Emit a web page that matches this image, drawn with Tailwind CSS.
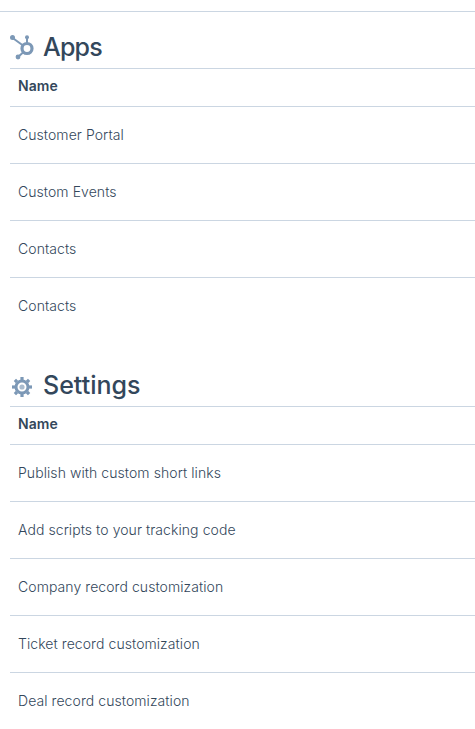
<!DOCTYPE html>
<html lang="en">
<head>
    <meta charset="UTF-8">
    <title>Apps and Settings</title>
    <script src="https://cdn.jsdelivr.net/npm/@tailwindcss/browser@4"></script>
</head>
<body class="bg-white overflow-hidden font-['Inter',sans-serif] text-[#33475b]">
    <div class="mt-[11px] border-t border-[#cbd6e2]"></div>

    <section class="pl-[10px]">
        <div class="h-[56px] pt-[15px] flex items-center gap-[8px]">
            <svg class="w-[25px] h-[26px] shrink-0" viewBox="0 0 25 26" fill="none">
                <circle cx="17" cy="13.5" r="5" stroke="#7c98b6" stroke-width="3.2"/>
                <path d="M2 2.5L13 10.5" stroke="#7c98b6" stroke-width="2"/>
                <path d="M17 2V9" stroke="#7c98b6" stroke-width="2"/>
                <path d="M13 17.5L8 22" stroke="#7c98b6" stroke-width="2"/>
                <circle cx="2.5" cy="2.5" r="2.5" fill="#7c98b6"/>
                <circle cx="17" cy="2.2" r="2" fill="#7c98b6"/>
                <circle cx="8" cy="22" r="2.4" fill="#7c98b6"/>
            </svg>
            <h2 class="text-[25px] font-medium leading-none tracking-[-0.8px]">Apps</h2>
        </div>
        <div class="h-[39px] border-y border-[#cbd6e2] pl-[8px] pb-[4px] flex items-center text-[14px] font-semibold tracking-[0.1px]">Name</div>
        <div class="h-[57px] border-b border-[#cbd6e2] pl-[8px] pb-[2px] flex items-center text-[14px] font-light tracking-[0.07px]">Customer Portal</div>
        <div class="h-[57px] border-b border-[#cbd6e2] pl-[8px] pb-[2px] flex items-center text-[14px] font-light tracking-[0.07px]">Custom Events</div>
        <div class="h-[57px] border-b border-[#cbd6e2] pl-[8px] pb-[2px] flex items-center text-[14px] font-light tracking-[0.07px]">Contacts</div>
        <div class="h-[57px] pl-[8px] pb-[2px] flex items-center text-[14px] font-light tracking-[0.07px]">Contacts</div>
    </section>

    <section class="pl-[10px] mt-[15px]">
        <div class="h-[56px] pt-[15px] flex items-center gap-[8px]">
            <svg class="w-[25px] h-[22px] shrink-0 mt-[2px]" viewBox="0 0 25 22" fill="none">
                <circle cx="12" cy="11" r="6" stroke="#7c98b6" stroke-width="3"/>
                <circle cx="12" cy="11" r="2.6" fill="#a9bbce"/>
                <g stroke="#7c98b6" stroke-width="3.2">
                    <path d="M12 1V4"/>
                    <path d="M12 18V21"/>
                    <path d="M2 11H5"/>
                    <path d="M19 11H22"/>
                    <path d="M4.9 3.9L7 6"/>
                    <path d="M17 16L19.1 18.1"/>
                    <path d="M4.9 18.1L7 16"/>
                    <path d="M17 6L19.1 3.9"/>
                </g>
            </svg>
            <h2 class="text-[25px] font-medium leading-none">Settings</h2>
        </div>
        <div class="h-[39px] border-y border-[#cbd6e2] pl-[8px] pb-[4px] flex items-center text-[14px] font-semibold tracking-[0.1px]">Name</div>
        <div class="h-[57px] border-b border-[#cbd6e2] pl-[8px] pb-[2px] flex items-center text-[14px] font-light tracking-[0.07px]">Publish with custom short links</div>
        <div class="h-[57px] border-b border-[#cbd6e2] pl-[8px] pb-[2px] flex items-center text-[14px] font-light tracking-[0.07px]">Add scripts to your tracking code</div>
        <div class="h-[57px] border-b border-[#cbd6e2] pl-[8px] pb-[2px] flex items-center text-[14px] font-light tracking-[0.07px]">Company record customization</div>
        <div class="h-[57px] border-b border-[#cbd6e2] pl-[8px] pb-[2px] flex items-center text-[14px] font-light tracking-[0.07px]">Ticket record customization</div>
        <div class="h-[57px] pl-[8px] pb-[2px] flex items-center text-[14px] font-light tracking-[0.07px]">Deal record customization</div>
    </section>
</body>
</html>
